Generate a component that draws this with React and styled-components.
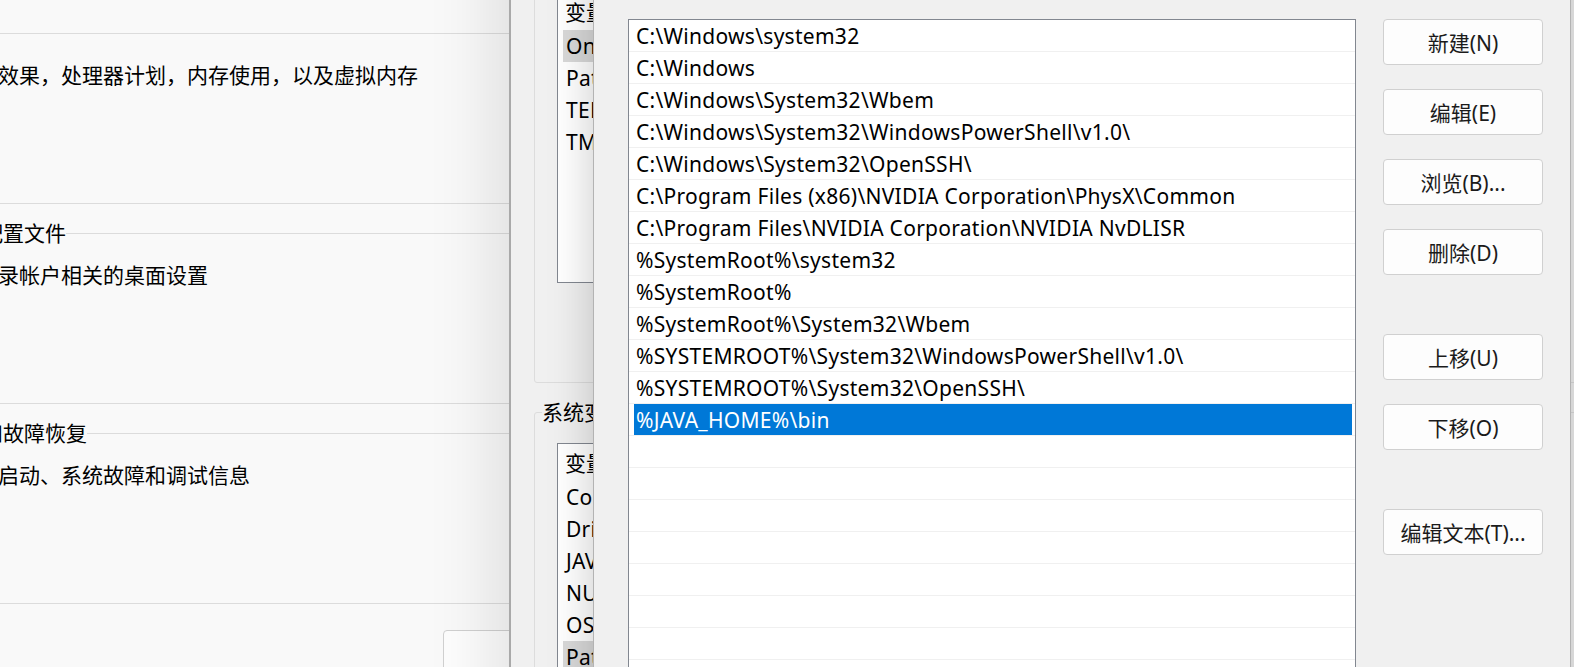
import styled, { createGlobalStyle } from "styled-components";

const GlobalStyle = createGlobalStyle`
  html, body {
    margin: 0;
    padding: 0;
    overflow: hidden;
    background: #f0f0f0;
  }
  body {
    font-family: "Noto Sans", "Noto Sans CJK SC", sans-serif;
    font-size: 21px;
    color: #000;
  }
`;

const Desktop = styled.div`
  position: relative;
  width: 1574px;
  height: 667px;
  overflow: hidden;
  background: #f0f0f0;
`;

/* ---------- system properties (back window) ---------- */

const PropsWindow = styled.div`
  position: absolute;
  left: -100px;
  top: -40px;
  width: 895px;
  height: 760px;
  box-sizing: border-box;
  padding: 73px 32px 0;
  background: #f9f9f9;
  display: flex;
  flex-direction: column;
`;

const GroupBox = styled.section`
  position: relative;
  box-sizing: border-box;
  height: 171px;
  margin-top: ${(p) => p.$gap || 0}px;
  padding: 27px 0 0 23px;
  border: 1px solid #dcdcdc;
  border-radius: 3px;
`;

const GroupLabel = styled.span`
  position: absolute;
  top: -15px;
  left: 7px;
  line-height: 28px;
  background: ${(p) => p.$bg || "#f9f9f9"};
  white-space: nowrap;
`;

const GroupText = styled.p`
  margin: 0;
  line-height: 28px;
  white-space: nowrap;
`;

const Footer = styled.div`
  display: flex;
  justify-content: flex-end;
  margin-top: 26px;
`;

/* ---------- environment variables (middle window) ---------- */

const EnvWindow = styled.div`
  position: absolute;
  left: 509px;
  top: -150px;
  width: 1200px;
  height: 900px;
  box-sizing: border-box;
  padding: 90px 0 0 23px;
  background: #f0f0f0;
  border-left: 2px solid #a9a9a9;
  box-shadow: -16px 0 64px rgba(0, 0, 0, 0.11);
`;

const EnvGroup = styled.section`
  position: relative;
  box-sizing: border-box;
  margin-top: ${(p) => p.$gap || 0}px;
  padding: ${(p) => p.$pad};
  border: 1px solid #dcdcdc;
  border-radius: 3px;
`;

const VarList = styled.div`
  box-sizing: border-box;
  width: 1000px;
  height: ${(p) => p.$h}px;
  border: 1px solid #828790;
  background: #fff;
  overflow: hidden;
`;

const VarHeader = styled.div`
  display: flex;
  height: 37px;
  padding-left: 7px;
  align-items: center;
  line-height: 28px;
`;

const VarRow = styled.div`
  display: flex;
  height: 32px;
  margin-left: 5px;
  padding-left: 3px;
  align-items: center;
  letter-spacing: 0.28px;
  background: ${(p) => (p.$selected ? "#d9d9d9" : "transparent")};
  white-space: nowrap;
`;

const VarName = styled.span`
  width: 290px;
`;

/* ---------- edit path dialog (front window) ---------- */

const EditDialog = styled.div`
  position: absolute;
  left: 593px;
  top: -60px;
  width: 978px;
  height: 800px;
  box-sizing: border-box;
  padding: 78px 27px 0 34px;
  display: flex;
  gap: 27px;
  align-items: flex-start;
  background: #f0f0f0;
  border: 1px solid #b3b3b3;
  box-shadow: 0 0 42px rgba(0, 0, 0, 0.22);
`;

const PathList = styled.div`
  box-sizing: border-box;
  width: 728px;
  height: 740px;
  border: 1px solid #828790;
  background: #fff;
  overflow: hidden;
`;

const PathRow = styled.div`
  box-sizing: border-box;
  height: 32px;
  border-bottom: 1px solid #f0f0f0;
  display: flex;
`;

const PathItem = styled.div`
  flex: 1;
  display: flex;
  align-items: center;
  margin: 0 3px 0 5px;
  padding-left: 2px;
  letter-spacing: 0.28px;
  white-space: nowrap;
  background: ${(p) => (p.$selected ? "#0078d7" : "transparent")};
  color: ${(p) => (p.$selected ? "#fff" : "#000")};
`;

const ButtonColumn = styled.div`
  display: flex;
  flex-direction: column;
  width: 160px;
  flex-shrink: 0;
`;

const DialogButton = styled.button`
  box-sizing: border-box;
  width: ${(p) => p.$w || 160}px;
  height: 46px;
  margin-top: ${(p) => p.$gap || 0}px;
  border: 1px solid #d0d0d0;
  border-radius: 4px;
  background: #fdfdfd;
  color: #1b1b1b;
  font: inherit;
  padding: 0;
`;

const paths = [
  "C:\\Windows\\system32",
  "C:\\Windows",
  "C:\\Windows\\System32\\Wbem",
  "C:\\Windows\\System32\\WindowsPowerShell\\v1.0\\",
  "C:\\Windows\\System32\\OpenSSH\\",
  "C:\\Program Files (x86)\\NVIDIA Corporation\\PhysX\\Common",
  "C:\\Program Files\\NVIDIA Corporation\\NVIDIA NvDLISR",
  "%SystemRoot%\\system32",
  "%SystemRoot%",
  "%SystemRoot%\\System32\\Wbem",
  "%SYSTEMROOT%\\System32\\WindowsPowerShell\\v1.0\\",
  "%SYSTEMROOT%\\System32\\OpenSSH\\",
  "%JAVA_HOME%\\bin",
  "", "", "", "", "", "", "", "", "", "", "",
];

const userVars = [
  ["OneDrive", "C:\\Users\\user\\OneDrive"],
  ["Path", "C:\\Users\\user\\AppData\\Local\\Microsoft\\WindowsApps;"],
  ["TEMP", "C:\\Users\\user\\AppData\\Local\\Temp"],
  ["TMP", "C:\\Users\\user\\AppData\\Local\\Temp"],
];

const systemVars = [
  ["ComSpec", "C:\\Windows\\system32\\cmd.exe"],
  ["DriverData", "C:\\Windows\\System32\\Drivers\\DriverData"],
  ["JAVA_HOME", "C:\\Program Files\\Java\\jdk-17"],
  ["NUMBER_OF_PROCESSORS", "16"],
  ["OS", "Windows_NT"],
  ["Path", "C:\\Windows\\system32;C:\\Windows;"],
];

const buttons = [
  ["新建(N)", 0],
  ["编辑(E)", 24],
  ["浏览(B)...", 24],
  ["删除(D)", 24],
  ["上移(U)", 59],
  ["下移(O)", 24],
  ["编辑文本(T)...", 59],
];

export default function App() {
  return (
    <>
      <GlobalStyle />
      <Desktop>
        <PropsWindow>
          <GroupBox>
            <GroupLabel>性能</GroupLabel>
            <GroupText>视觉效果，处理器计划，内存使用，以及虚拟内存</GroupText>
          </GroupBox>
          <GroupBox $gap={29}>
            <GroupLabel>用户配置文件</GroupLabel>
            <GroupText>与登录帐户相关的桌面设置</GroupText>
          </GroupBox>
          <GroupBox $gap={29}>
            <GroupLabel>启动和故障恢复</GroupLabel>
            <GroupText>系统启动、系统故障和调试信息</GroupText>
          </GroupBox>
          <Footer>
            <DialogButton $w={320}>环境变量(N)...</DialogButton>
          </Footer>
        </PropsWindow>

        <EnvWindow>
          <EnvGroup $pad="51px 0 99px 22px">
            <GroupLabel $bg="#f0f0f0">user 的用户变量(U)</GroupLabel>
            <VarList $h={291}>
              <VarHeader>
                <VarName>变量</VarName>
                <span>值</span>
              </VarHeader>
              {userVars.map(([name, value], i) => (
                <VarRow key={name} $selected={i === 0}>
                  <VarName>{name}</VarName>
                  <span>{value}</span>
                </VarRow>
              ))}
            </VarList>
          </EnvGroup>
          <EnvGroup $gap={29} $pad="30px 0 0 22px">
            <GroupLabel $bg="#f0f0f0">系统变量(S)</GroupLabel>
            <VarList $h={400}>
              <VarHeader>
                <VarName>变量</VarName>
                <span>值</span>
              </VarHeader>
              {systemVars.map(([name, value], i) => (
                <VarRow key={name} $selected={i === systemVars.length - 1}>
                  <VarName>{name}</VarName>
                  <span>{value}</span>
                </VarRow>
              ))}
            </VarList>
          </EnvGroup>
        </EnvWindow>

        <EditDialog>
          <PathList>
            {paths.map((p, i) => (
              <PathRow key={i}>
                <PathItem $selected={i === 12}>{p}</PathItem>
              </PathRow>
            ))}
          </PathList>
          <ButtonColumn>
            {buttons.map(([label, gap]) => (
              <DialogButton key={label} $gap={gap}>
                {label}
              </DialogButton>
            ))}
          </ButtonColumn>
        </EditDialog>
      </Desktop>
    </>
  );
}
